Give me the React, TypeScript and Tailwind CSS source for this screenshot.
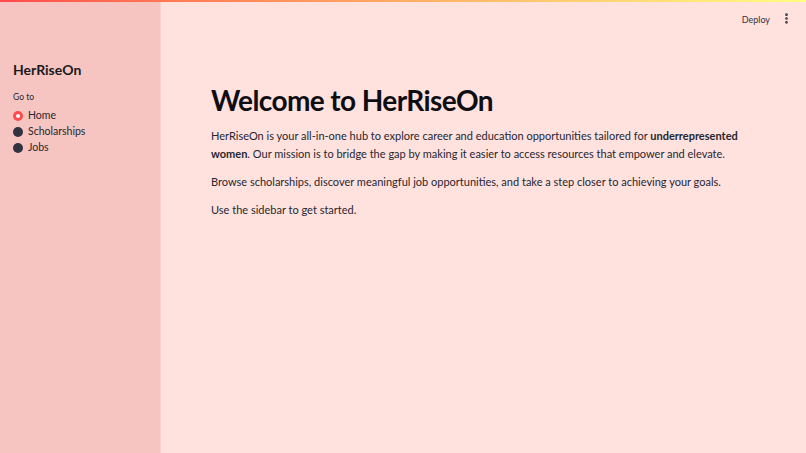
import { EllipsisVertical } from 'lucide-react';

const pages = ['Home', 'Scholarships', 'Jobs'];

function NavRadio({ label, active }: { label: string; active: boolean }) {
  return (
    <label className="flex items-center gap-[5px] h-4 cursor-pointer">
      {active ? (
        <span className="size-[10px] rounded-full bg-[#ff4b4b] flex items-center justify-center">
          <span className="size-[4px] rounded-full bg-white" />
        </span>
      ) : (
        <span className="size-[10px] rounded-full bg-[#31333f]" />
      )}
      <span className="text-[10.5px] text-[#262730]">{label}</span>
    </label>
  );
}

export default function App() {
  return (
    <div className="relative flex h-[453px] w-full overflow-hidden bg-[#ffe1de] font-['Lato',sans-serif]">
      <div className="absolute top-0 left-0 right-0 h-[2px] bg-gradient-to-r from-[#ff4b4b] to-[#fffd80]" />

      <aside className="w-[161px] shrink-0 bg-[#f6c5c1] border-r border-[#f8d2cf] pl-[13px] pt-[61px]">
        <h2 className="text-[14px] font-bold text-[#1a1a1f] leading-[18px]">HerRiseOn</h2>
        <p className="mt-[12px] text-[8.5px] text-[#262730]">Go to</p>
        <div className="mt-[4px] flex flex-col">
          {pages.map((p, i) => (
            <NavRadio key={p} label={p} active={i === 0} />
          ))}
        </div>
      </aside>

      <main className="flex-1 flex flex-col">
        <header className="flex items-center justify-end h-[37px] pr-[13px] gap-[10px]">
          <span className="text-[9px] text-[#31333f] translate-y-[1px]">Deploy</span>
          <EllipsisVertical className="size-[13px] text-[#31333f]" strokeWidth={3} />
        </header>

        <div className="pl-[50px] pr-[48px] text-[#262730]">
          <h1 className="mt-[46px] text-[28px] font-bold text-[#0e0e12] leading-[34px] tracking-[-0.6px]">
            Welcome to HerRiseOn
          </h1>
          <p className="mt-[10px] text-[11px] leading-[18px]">
            HerRiseOn is your all-in-one hub to explore career and education opportunities tailored for{' '}
            <strong className="font-bold">underrepresented women</strong>. Our mission is to bridge the gap by making it
            easier to access resources that empower and elevate.
          </p>
          <p className="mt-[10px] text-[11px] leading-[18px]">
            Browse scholarships, discover meaningful job opportunities, and take a step closer to achieving your goals.
          </p>
          <p className="mt-[10px] text-[11px] leading-[18px]">Use the sidebar to get started.</p>
        </div>
      </main>
    </div>
  );
}
